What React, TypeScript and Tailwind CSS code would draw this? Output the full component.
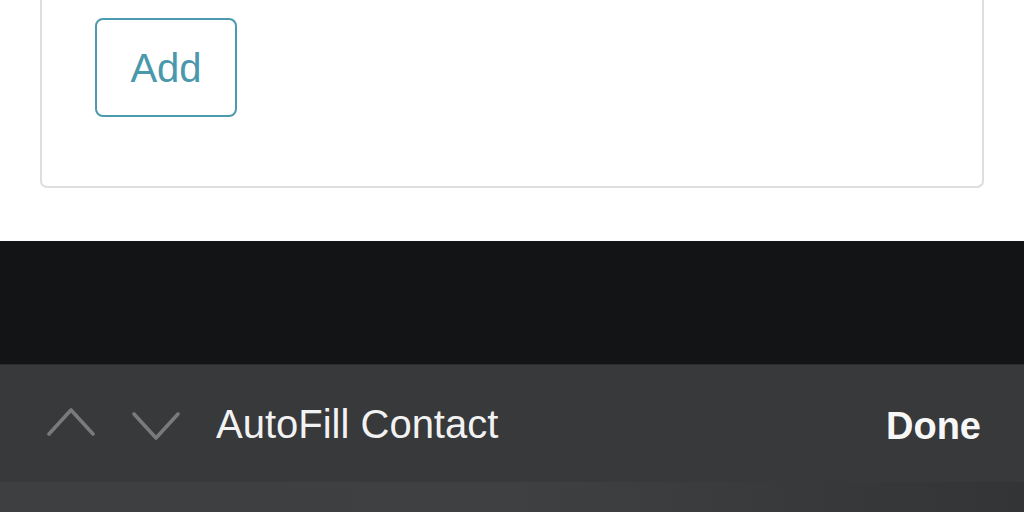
import React from 'react';

const Chevron: React.FC<{ dir: 'up' | 'down' }> = ({ dir }) => (
  <svg width="48" height="30" viewBox="0 0 48 30" fill="none">
    <path
      d={dir === 'up' ? 'M2 27 L24 3 L46 27' : 'M2 3 L24 27 L46 3'}
      stroke="#7a7a7c"
      strokeWidth="3.6"
      strokeLinecap="round"
      strokeLinejoin="round"
    />
  </svg>
);

const App: React.FC = () => (
  <div className="w-[1024px] h-[512px] flex flex-col overflow-hidden font-['Liberation_Sans',Arial,sans-serif]">
    <div className="h-[241px] bg-white px-[40px] shrink-0">
      <div className="h-[188px] border-x-2 border-b-2 border-[#dedede] rounded-b-[7px] pl-[53px] pt-[18px]">
        <button className="w-[142px] h-[99px] border-2 border-[#4c9aad] rounded-[8px] text-[40px] text-[#4a98ab] leading-none flex items-center justify-center">
          Add
        </button>
      </div>
    </div>
    <div className="h-[123px] bg-[#131416] shrink-0" />
    <div className="h-[118px] bg-[#38393b] shrink-0 flex items-center pl-[47px] pr-[43px] border-t border-[#2a2b2d]">
      <div className="flex items-center gap-[37px]">
        <div className="pb-[4px]"><Chevron dir="up" /></div>
        <div className="pt-[4px]"><Chevron dir="down" /></div>
      </div>
      <span className="ml-[36px] text-[40px] text-[#f2f2f2] leading-none pt-[1px]">AutoFill Contact</span>
      <span className="ml-auto text-[38px] font-bold text-[#f7f7f7] leading-none pt-[4px]">Done</span>
    </div>
    <div className="flex-1 bg-gradient-to-r from-[#3e3f41] via-[#3f4042] to-[#333436]" />
  </div>
);

export default App;
